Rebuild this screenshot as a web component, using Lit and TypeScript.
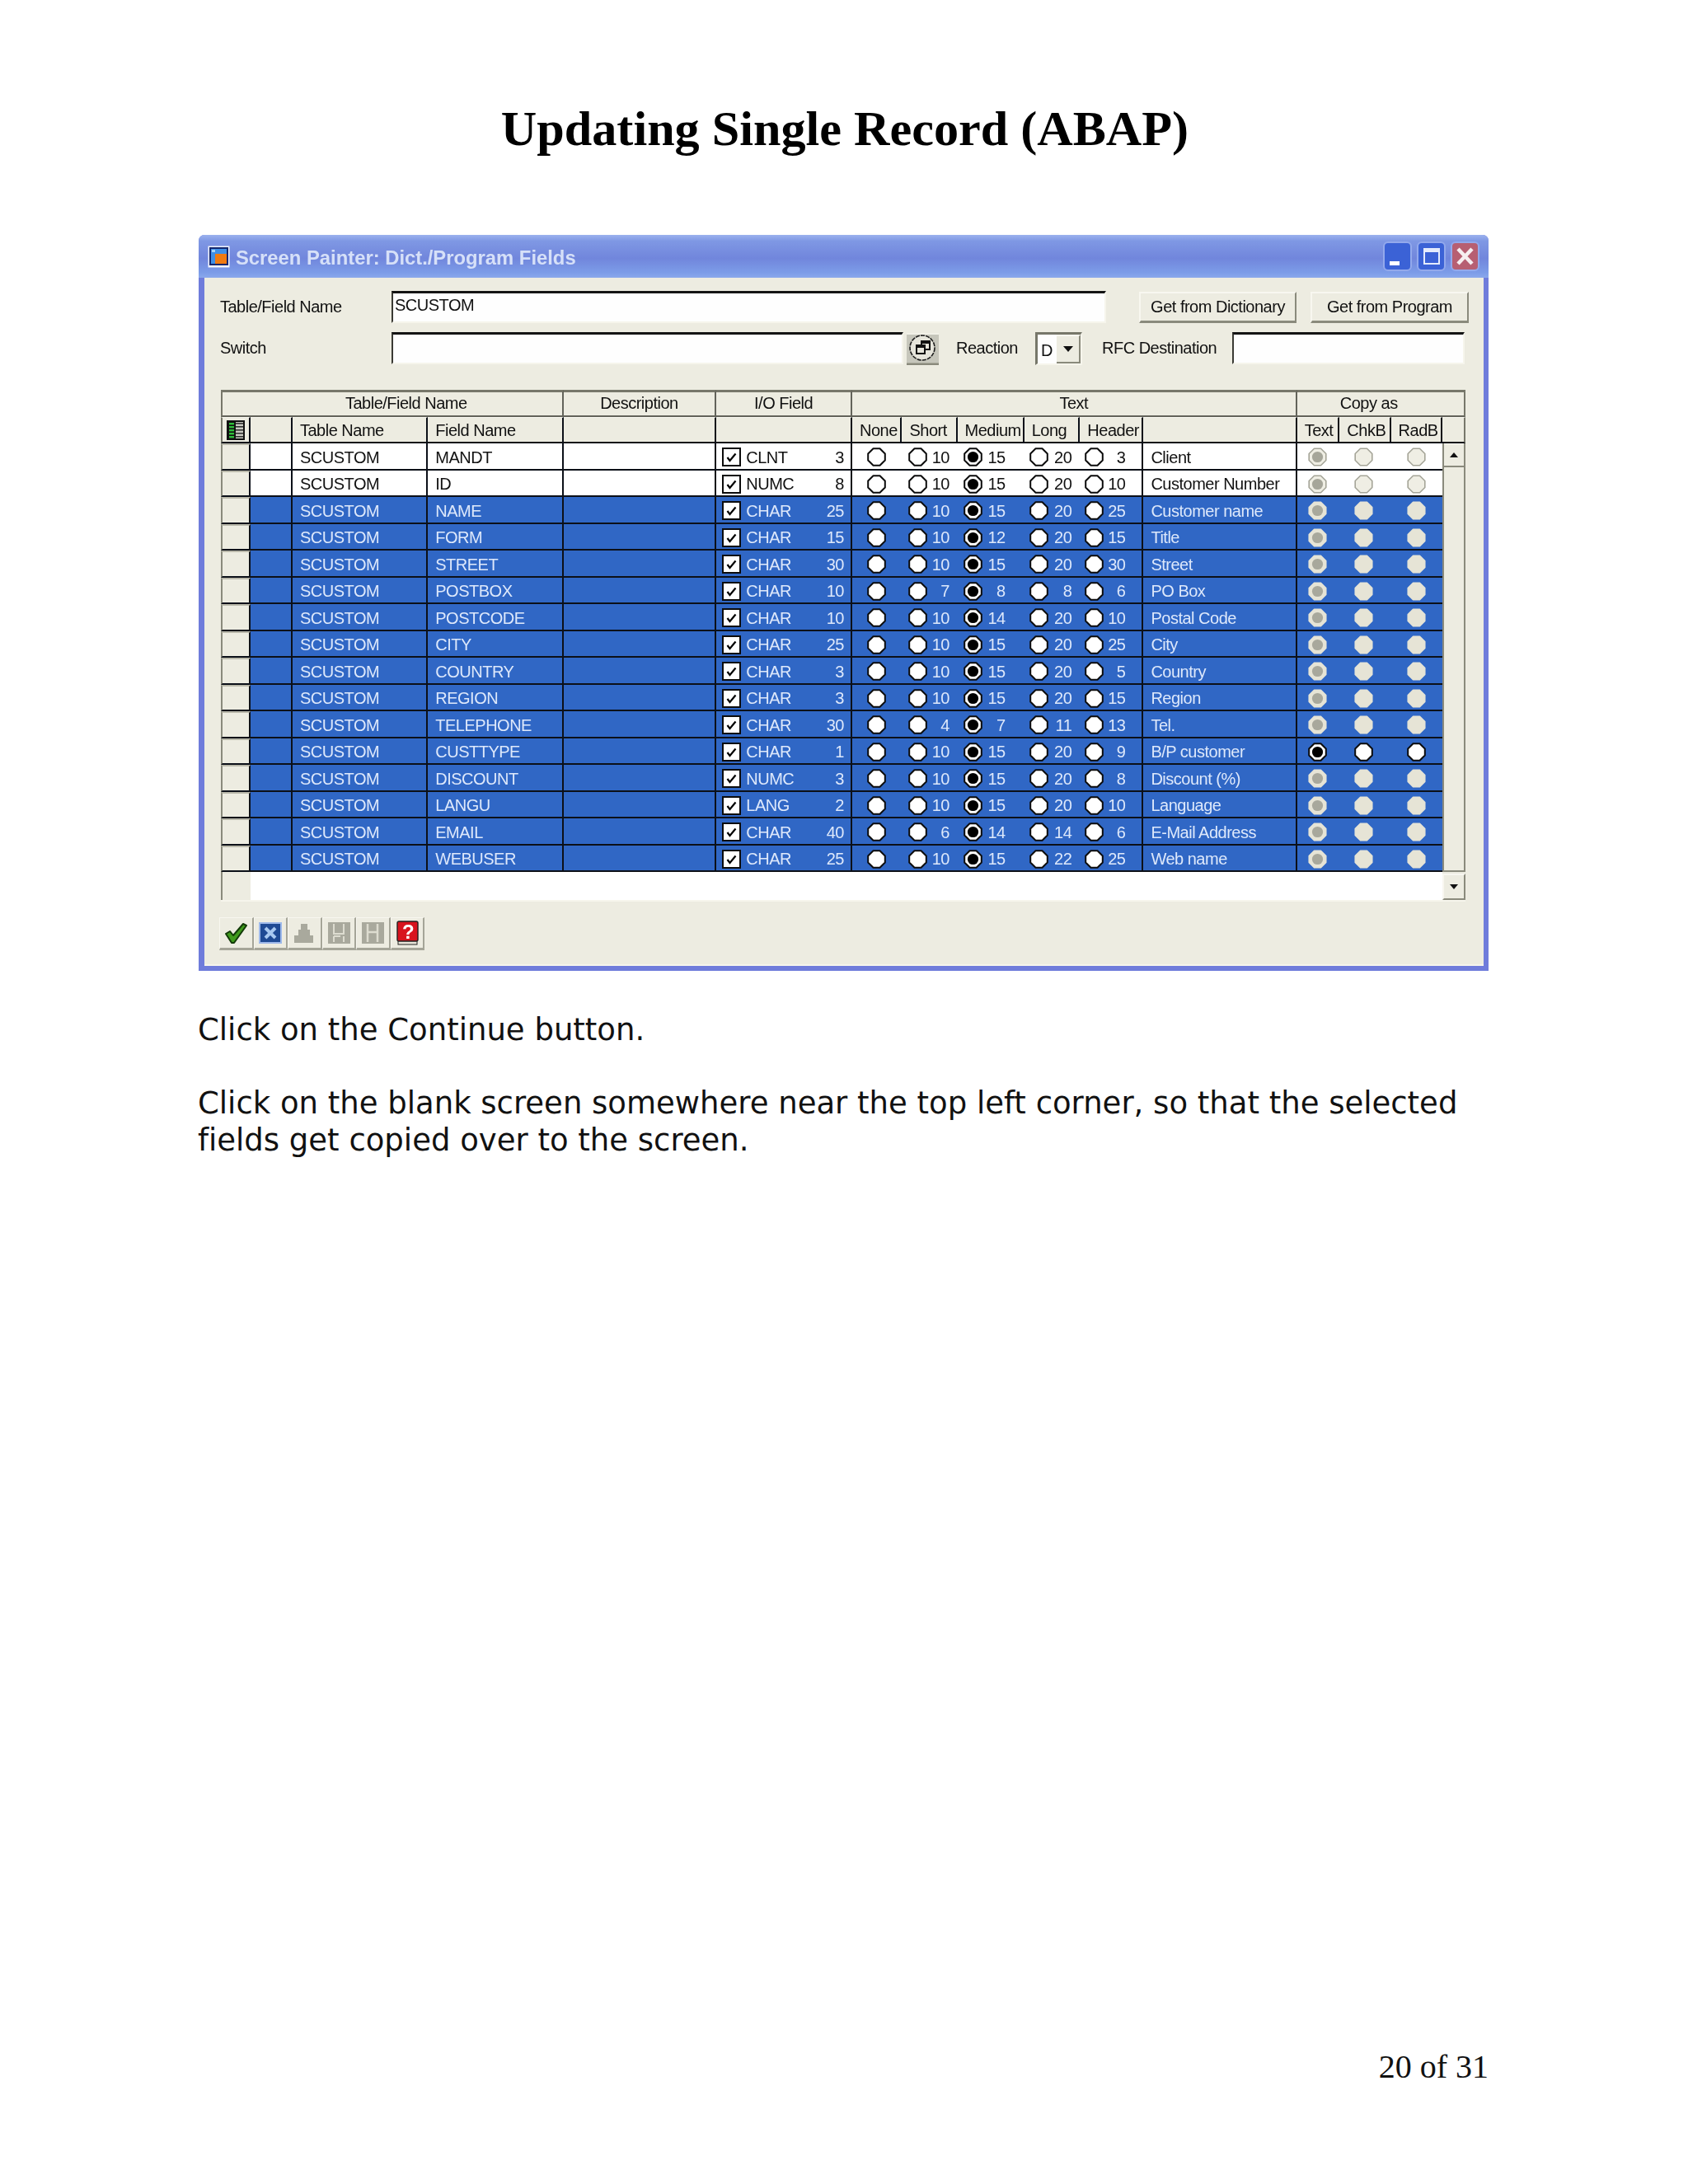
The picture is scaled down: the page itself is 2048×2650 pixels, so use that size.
import { LitElement, html, css, svg } from "lit";
import { customElement } from "lit/decorators.js";

type Row = [string, string, string, string, string, string, string, string, string];

const ROWS: Row[] = [
  ["MANDT", "CLNT", "3", "10", "15", "20", "3", "Client", ""],
  ["ID", "NUMC", "8", "10", "15", "20", "10", "Customer Number", ""],
  ["NAME", "CHAR", "25", "10", "15", "20", "25", "Customer name", ""],
  ["FORM", "CHAR", "15", "10", "12", "20", "15", "Title", ""],
  ["STREET", "CHAR", "30", "10", "15", "20", "30", "Street", ""],
  ["POSTBOX", "CHAR", "10", "7", "8", "8", "6", "PO Box", ""],
  ["POSTCODE", "CHAR", "10", "10", "14", "20", "10", "Postal Code", ""],
  ["CITY", "CHAR", "25", "10", "15", "20", "25", "City", ""],
  ["COUNTRY", "CHAR", "3", "10", "15", "20", "5", "Country", ""],
  ["REGION", "CHAR", "3", "10", "15", "20", "15", "Region", ""],
  ["TELEPHONE", "CHAR", "30", "4", "7", "11", "13", "Tel.", ""],
  ["CUSTTYPE", "CHAR", "1", "10", "15", "20", "9", "B/P customer", "active"],
  ["DISCOUNT", "NUMC", "3", "10", "15", "20", "8", "Discount (%)", ""],
  ["LANGU", "LANG", "2", "10", "15", "20", "10", "Language", ""],
  ["EMAIL", "CHAR", "40", "6", "14", "14", "6", "E-Mail Address", ""],
  ["WEBUSER", "CHAR", "25", "10", "15", "22", "25", "Web name", ""],
];

const OCT = "7.5,1.2 15.5,1.2 21.8,7.5 21.8,15.5 15.5,21.8 7.5,21.8 1.2,15.5 1.2,7.5";

function radio(kind: string, on: boolean) {
  return html`<svg class="radio" viewBox="0 0 23 23" aria-hidden="true">
    <polygon class=${"r-" + kind} points=${OCT} stroke-linejoin="round"></polygon>
    ${on ? svg`<circle class=${"d-" + kind} cx="11.5" cy="11.5" r="6.6"></circle>` : null}
  </svg>`;
}

@customElement("app-root")
export class AppRoot extends LitElement {
  static styles = css`
    :host { display: block; width: 2048px; height: 2650px; background: #fff; }
    .page { height: 2650px; box-sizing: border-box; display: flex; flex-direction: column; padding: 121px 242px 120px 240px; color: #000; }
    h1 { margin: 0; font: bold 60.2px/70px "Liberation Serif", serif; text-align: center; padding-left: 4px; white-space: nowrap; }
    p { margin: 0; font: 37px/45px "DejaVu Sans", sans-serif; font-variant-ligatures: none; color: #111; }
    .p1 { margin-top: 49px; }
    .p2 { margin-top: 44px; }
    .footer { margin-top: auto; font: 40px/44px "Liberation Serif", serif; text-align: right; color: #111; }

    .window { margin: 94px 0 0 1px; height: 893px; box-sizing: border-box; display: flex; flex-direction: column; background: #6f7cdb; border-radius: 7px 7px 0 0; filter: blur(0.45px); font: 20px/24px "Liberation Sans", sans-serif; letter-spacing: -0.5px; color: #111; }
    .titlebar { height: 52px; flex: none; display: flex; align-items: center; padding: 0 11px 0 11px; border-radius: 7px 7px 0 0; background: linear-gradient(180deg, #9cb2ee 0, #7f98e4 14%, #7186dc 55%, #7c9ce8 88%, #8aa8ec 100%); }
    .appicon { width: 27px; height: 27px; flex: none; }
    .titletext { margin: 4px 0 0 7px; font: bold 23.8px/26px "Liberation Sans", sans-serif; letter-spacing: 0; color: #d6e0f8; white-space: nowrap; }
    .winbtns { margin-left: auto; display: flex; gap: 6px; }
    .winbtn { width: 35px; height: 36px; display: block; }

    .body { flex: 1; margin: 0 6px 6px 7px; background: #edece1; padding: 16px 0 0 20px; display: flex; flex-direction: column; border-bottom: 2px solid #f6f5ec; }
    .form-row { display: flex; align-items: center; height: 39px; }
    .form-row.two { margin-top: 11px; }
    .lbl { white-space: nowrap; flex: none; padding-bottom: 2px; }
    .lbl-main { width: 208px; margin-left: -1px; }
    .field { box-sizing: border-box; height: 39px; flex: none; background: #fefefe; border-top: 3px solid #141414; border-left: 2px solid #3a3a34; border-right: 2px solid #f6f5ec; border-bottom: 2px solid #f6f5ec; padding: 2px 0 0 2px; line-height: 24px; }
    .f1 { width: 867px; }
    .f2 { width: 621px; }
    .f3 { width: 282px; margin-left: 20px; }
    .btn { box-sizing: border-box; height: 38px; flex: none; display: flex; align-items: center; justify-content: center; background: #edece1; border-top: 2px solid #f8f7f0; border-left: 2px solid #f8f7f0; border-right: 2px solid #8a8a7c; border-bottom: 3px solid #8a8a7c; white-space: nowrap; }
    .b1 { width: 191px; margin-left: 40px; }
    .b2 { width: 192px; margin-left: 17px; }
    .circle { width: 39px; height: 39px; margin: 2px 0 0 4px; flex: none; display: block; }
    .reaction { width: 77px; margin-left: 21px; }
    .combo { box-sizing: border-box; width: 57px; height: 40px; margin-left: 19px; flex: none; display: flex; background: #fefefe; border-top: 3px solid #77776a; border-left: 3px solid #77776a; border-right: 2px solid #f6f5ec; border-bottom: 2px solid #f6f5ec; }
    .combo-v { flex: 1; padding: 7px 0 0 4px; }
    .combo-b { box-sizing: border-box; width: 29px; display: flex; align-items: center; justify-content: center; background: #edece1; border-top: 2px solid #f8f7f0; border-right: 2px solid #8a8a7c; border-bottom: 2px solid #8a8a7c; }
    .tri { width: 0; height: 0; border-left: 6px solid transparent; border-right: 6px solid transparent; border-top: 7px solid #111; }
    .rfc { width: 138px; margin-left: 24px; }

    .grid { margin-top: 31px; width: 1510px; display: grid; flex: none;
      grid-template-columns: 35.8px 51.2px 164.3px 164.3px 185.7px 164.7px 60.5px 67.1px 81.2px 67.6px 77.1px 186.3px 51.6px 62.3px 62.8px 27.3px;
      grid-template-rows: 33px 32.3px repeat(16, 32.5px) 34px;
      border-bottom: 2px solid #f6f5ec; }
    .cell { box-sizing: border-box; display: flex; align-items: center; white-space: nowrap; min-width: 0; border-bottom: 2.5px solid #0c1018; }
    .line { border-right: 2.5px solid #0c1018; }
    .h { background: #edece1; border-top: 1.5px solid #f8f7f0; }
    .h1 { justify-content: center; border-bottom: 2.5px solid #63635a; border-right: 2.5px solid #63635a; border-top: 3px solid #77776a; padding-bottom: 2px; }
    .h1.first { padding-left: 34px; }
    .h1.copy { padding-right: 28px; border-right: 2px solid #77776a; }
    .h2 { padding-left: 9px; }
    .h2.lastc { border-right: 2px solid #77776a; }
    .first-col { border-left: 2px solid #77776a; }
    .rowhead { background: #edece1; border-left: 2px solid #8a8a7c; border-top: 2px solid #b9b8aa; }
    .hicon { width: 22px; height: 24px; display: block; margin-left: 5px; }
    .wh { background: #fff; color: #111; padding-top: 2px; }
    .bl { background: #3067c5; color: #dde8fb; padding-top: 2px; }
    .pad { padding-left: 9px; }
    .io { padding-left: 7px; padding-right: 8px; }
    .cb { width: 23px; height: 23px; flex: none; display: block; }
    .io-t { margin-left: 6px; }
    .io-n { margin-left: auto; }
    .rc { justify-content: space-between; }
    .c-none { justify-content: center; padding-right: 2px; }
    .c-short { padding-left: 7.5px; padding-right: 9.6px; }
    .c-med { padding-left: 7px; padding-right: 23px; }
    .c-long { padding-left: 6px; padding-right: 10px; }
    .c-hdr { padding-left: 6px; padding-right: 20px; }
    .c-copy { justify-content: center; padding-right: 2px; }
    .c-chk { padding-right: 4px; }
    .radio { width: 23px; height: 23px; flex: none; display: block; }
    .r-n { fill: #fff; stroke: #0c0c0c; stroke-width: 2; }
    .d-n { fill: #000; }
    .r-dw { fill: #efeee4; stroke: #a5a598; stroke-width: 1.6; }
    .d-dw { fill: #a6a69a; }
    .r-db { fill: #e6e4d6; stroke: #e6e4d6; stroke-width: 1.5; }
    .d-db { fill: #a8a89c; }
    .scroll { grid-column: 16; grid-row: 3 / 19; box-sizing: border-box; display: flex; flex-direction: column; background: #edece1; border-left: 2.5px solid #8a8a7c; border-right: 2.5px solid #8a8a7c; border-bottom: 2px solid #8a8a7c; }
    .sb { box-sizing: border-box; flex: none; display: flex; align-items: center; justify-content: center; background: #edece1; border-bottom: 2px solid #8a8a7c; border-top: 1px solid #f8f7f0; }
    .sb-up { height: 29px; }
    .uptri { width: 0; height: 0; border-left: 5px solid transparent; border-right: 5px solid transparent; border-bottom: 6px solid #111; }
    .dntri { width: 0; height: 0; border-left: 5px solid transparent; border-right: 5px solid transparent; border-top: 6px solid #111; }
    .blank-head { grid-column: 1; grid-row: 19; background: #edece1; border-left: 2px solid #8a8a7c; }
    .blank { grid-column: 2 / 16; grid-row: 19; background: #fff; }
    .sb-dn { grid-column: 16; grid-row: 19; box-sizing: border-box; margin-top: 2px; display: flex; align-items: center; justify-content: center; background: #edece1; border: 2px solid #8a8a7c; border-top-color: #f8f7f0; border-left-color: #f8f7f0; }

    .toolbar { display: flex; margin-top: 19px; margin-left: -2px; }
    .tb { box-sizing: border-box; width: 41.5px; height: 40px; display: flex; align-items: center; justify-content: center; flex: none; background: #edece1; border-top: 1px solid #f8f7f0; border-left: 1px solid #f8f7f0; border-right: 2px solid #a5a598; border-bottom: 3px solid #a5a598; }
    .tb svg { width: 30px; height: 30px; display: block; }
  `;

  private appIcon() {
    return html`<svg class="appicon" viewBox="0 0 27 27" aria-hidden="true">
      <rect x="0.5" y="0.5" width="26" height="26" fill="#f2f4fc"></rect>
      <rect x="2" y="2" width="23" height="22" fill="#14276e"></rect>
      <rect x="4" y="4" width="19" height="18" fill="#3f8fe6"></rect>
      <rect x="9" y="10" width="14" height="12" fill="#f07a10"></rect>
      <rect x="5" y="5" width="4" height="3" fill="#a9d4f6"></rect>
    </svg>`;
  }

  private winBtn(kind: string) {
    const bg = kind === "x" ? "#b75f72" : "#3b62d6";
    return html`<svg class="winbtn" viewBox="0 0 35 36" aria-hidden="true">
      <rect x="1" y="1" width="33" height="34" rx="5" fill=${bg} stroke="#93a9ec" stroke-width="2"></rect>
      ${kind === "min" ? svg`<rect x="8" y="24" width="12" height="5" fill="#fff"></rect>` : null}
      ${kind === "max" ? svg`<rect x="9" y="9" width="18" height="18" fill="none" stroke="#e4ebfc" stroke-width="2"></rect><rect x="9" y="9" width="18" height="4" fill="#e4ebfc"></rect>` : null}
      ${kind === "x" ? svg`<path d="M9 9 L26 27 M26 9 L9 27" stroke="#f6eef0" stroke-width="4.5" fill="none"></path>` : null}
    </svg>`;
  }

  private circleBtn() {
    return html`<svg class="circle" viewBox="0 0 39 39" aria-hidden="true">
      <rect width="39" height="39" fill="#c6c6bb"></rect>
      <rect x="0" y="0" width="39" height="2" fill="#f2f1e8"></rect>
      <rect x="0" y="36.5" width="39" height="2.5" fill="#8a8a7c"></rect>
      <circle cx="19" cy="18" r="15" fill="#e6e5db" stroke="#1c1c1c" stroke-width="1.6" stroke-dasharray="5 1.2"></circle>
      <rect x="18" y="10" width="10" height="10" fill="none" stroke="#111" stroke-width="2"></rect>
      <rect x="18" y="10" width="10" height="3" fill="#111"></rect>
      <rect x="12" y="15" width="10" height="10" fill="#e6e5db" stroke="#111" stroke-width="2"></rect>
      <rect x="12" y="15" width="10" height="3" fill="#111"></rect>
    </svg>`;
  }

  private headIcon() {
    const lines = [4, 8, 12, 16, 20];
    return html`<svg class="hicon" viewBox="0 0 22 24" aria-hidden="true">
      <rect width="22" height="24" fill="#111"></rect>
      <rect x="11" y="2" width="9" height="20" fill="#c8c8c0"></rect>
      ${lines.map((y) => svg`
        <rect x="3" y=${y - 1} width="6" height="2.4" fill="#2fbf3a"></rect>
        <rect x="11" y=${y - 1} width="9" height="1.6" fill="#333"></rect>`)}
    </svg>`;
  }

  private tools() {
    return [
      svg`<path d="M3 16 L8 13 L12 18 L24 4 L28 6 L13 27 L10 27 Z" fill="#3f9a1c" stroke="#123a08" stroke-width="2" stroke-linejoin="round"></path>`,
      svg`<rect x="1" y="2" width="28" height="26" fill="#9db8ea"></rect><rect x="3" y="4" width="24" height="22" fill="#1f4a94"></rect><path d="M9 9 L21 21 M21 9 L9 21" stroke="#a8c8f0" stroke-width="4"></path>`,
      svg`<path d="M11 4 H19 V11 H22 V18 H26 V27 H3 V18 H8 V11 H11 Z" fill="#a9a99d"></path>`,
      svg`<rect x="2" y="2" width="27" height="26" fill="#a9a99d"></rect><path d="M9 4 V16 H21 V4 M9 19 V26 M21 19 V26 M9 19 H17" fill="none" stroke="#dddcd0" stroke-width="2"></path>`,
      svg`<rect x="2" y="2" width="27" height="26" fill="#a9a99d"></rect><path d="M9 4 V26 M21 4 V26 M9 14 H21" fill="none" stroke="#dddcd0" stroke-width="2.5"></path>`,
      svg`<rect x="4" y="24" width="23" height="5" fill="#e8e4d8" stroke="#222" stroke-width="1"></rect><rect x="3" y="1" width="25" height="24" rx="2" fill="#d8141e" stroke="#222" stroke-width="1.4"></rect><text x="16" y="22" text-anchor="middle" font-family="Liberation Sans" font-weight="bold" font-size="24" fill="#fff">?</text>`,
    ];
  }

  private row(r: Row, i: number) {
    const blue = i >= 2;
    const c = blue ? "bl" : "wh";
    const active = r[8] === "active";
    const copyKind = active ? "n" : blue ? "db" : "dw";
    return html`
      <div class="cell rowhead line"></div>
      <div class="cell line ${c}"></div>
      <div class="cell line pad ${c}">SCUSTOM</div>
      <div class="cell line pad ${c}">${r[0]}</div>
      <div class="cell line ${c}"></div>
      <div class="cell line io ${c}">
        <svg class="cb" viewBox="0 0 23 23" aria-hidden="true">
          <rect x="1" y="1" width="21" height="21" fill="#fff" stroke="#0c0c0c" stroke-width="2"></rect>
          <path d="M6.5 12 L9.5 16 L16.5 7.5" fill="none" stroke="#000" stroke-width="2.2"></path>
        </svg>
        <span class="io-t">${r[1]}</span><span class="io-n">${r[2]}</span>
      </div>
      <div class="cell rc c-none ${c}">${radio("n", false)}</div>
      <div class="cell rc c-short ${c}">${radio("n", false)}<span>${r[3]}</span></div>
      <div class="cell rc c-med ${c}">${radio("n", true)}<span>${r[4]}</span></div>
      <div class="cell rc c-long ${c}">${radio("n", false)}<span>${r[5]}</span></div>
      <div class="cell rc c-hdr line ${c}">${radio("n", false)}<span>${r[6]}</span></div>
      <div class="cell line pad ${c}">${r[7]}</div>
      <div class="cell c-copy ${c}">${radio(copyKind, true)}</div>
      <div class="cell c-copy c-chk ${c}">${radio(copyKind, false)}</div>
      <div class="cell c-copy ${c}">${radio(copyKind, false)}</div>
    `;
  }

  render() {
    const heads = ["None", "Short", "Medium", "Long", "Header"];
    return html`
      <div class="page">
        <h1>Updating Single Record (ABAP)</h1>
        <div class="window">
          <div class="titlebar">
            ${this.appIcon()}
            <span class="titletext">Screen Painter: Dict./Program Fields</span>
            <div class="winbtns">${this.winBtn("min")}${this.winBtn("max")}${this.winBtn("x")}</div>
          </div>
          <div class="body">
            <div class="form-row">
              <span class="lbl lbl-main">Table/Field Name</span>
              <div class="field f1">SCUSTOM</div>
              <div class="btn b1">Get from Dictionary</div>
              <div class="btn b2">Get from Program</div>
            </div>
            <div class="form-row two">
              <span class="lbl lbl-main">Switch</span>
              <div class="field f2"></div>
              ${this.circleBtn()}
              <span class="lbl reaction">Reaction</span>
              <div class="combo"><div class="combo-v">D</div><div class="combo-b"><div class="tri"></div></div></div>
              <span class="lbl rfc">RFC Destination</span>
              <div class="field f3"></div>
            </div>

            <div class="grid">
              <div class="cell h h1 first first-col" style="grid-column: 1 / 5">Table/Field Name</div>
              <div class="cell h h1">Description</div>
              <div class="cell h h1">I/O Field</div>
              <div class="cell h h1" style="grid-column: 7 / 13">Text</div>
              <div class="cell h h1 copy" style="grid-column: 13 / 17">Copy as</div>

              <div class="cell h line first-col">${this.headIcon()}</div>
              <div class="cell h line"></div>
              <div class="cell h h2 line">Table Name</div>
              <div class="cell h h2 line">Field Name</div>
              <div class="cell h line"></div>
              <div class="cell h line"></div>
              ${heads.map((t) => html`<div class="cell h h2 line">${t}</div>`)}
              <div class="cell h line"></div>
              <div class="cell h h2 line">Text</div>
              <div class="cell h h2 line">ChkB</div>
              <div class="cell h h2 line">RadB</div>
              <div class="cell h lastc h2"></div>

              ${ROWS.map((r, i) => this.row(r, i))}

              <div class="scroll"><div class="sb sb-up"><div class="uptri"></div></div></div>
              <div class="blank-head"></div>
              <div class="blank"></div>
              <div class="sb-dn"><div class="dntri"></div></div>
            </div>

            <div class="toolbar">
              ${this.tools().map((t) => html`<div class="tb"><svg viewBox="0 0 30 30" aria-hidden="true">${t}</svg></div>`)}
            </div>
          </div>
        </div>
        <p class="p1">Click on the Continue button.</p>
        <p class="p2">Click on the blank screen somewhere near the top left corner, so that the selected fields get copied over to the screen.</p>
        <div class="footer">20 of 31</div>
      </div>
    `;
  }
}
